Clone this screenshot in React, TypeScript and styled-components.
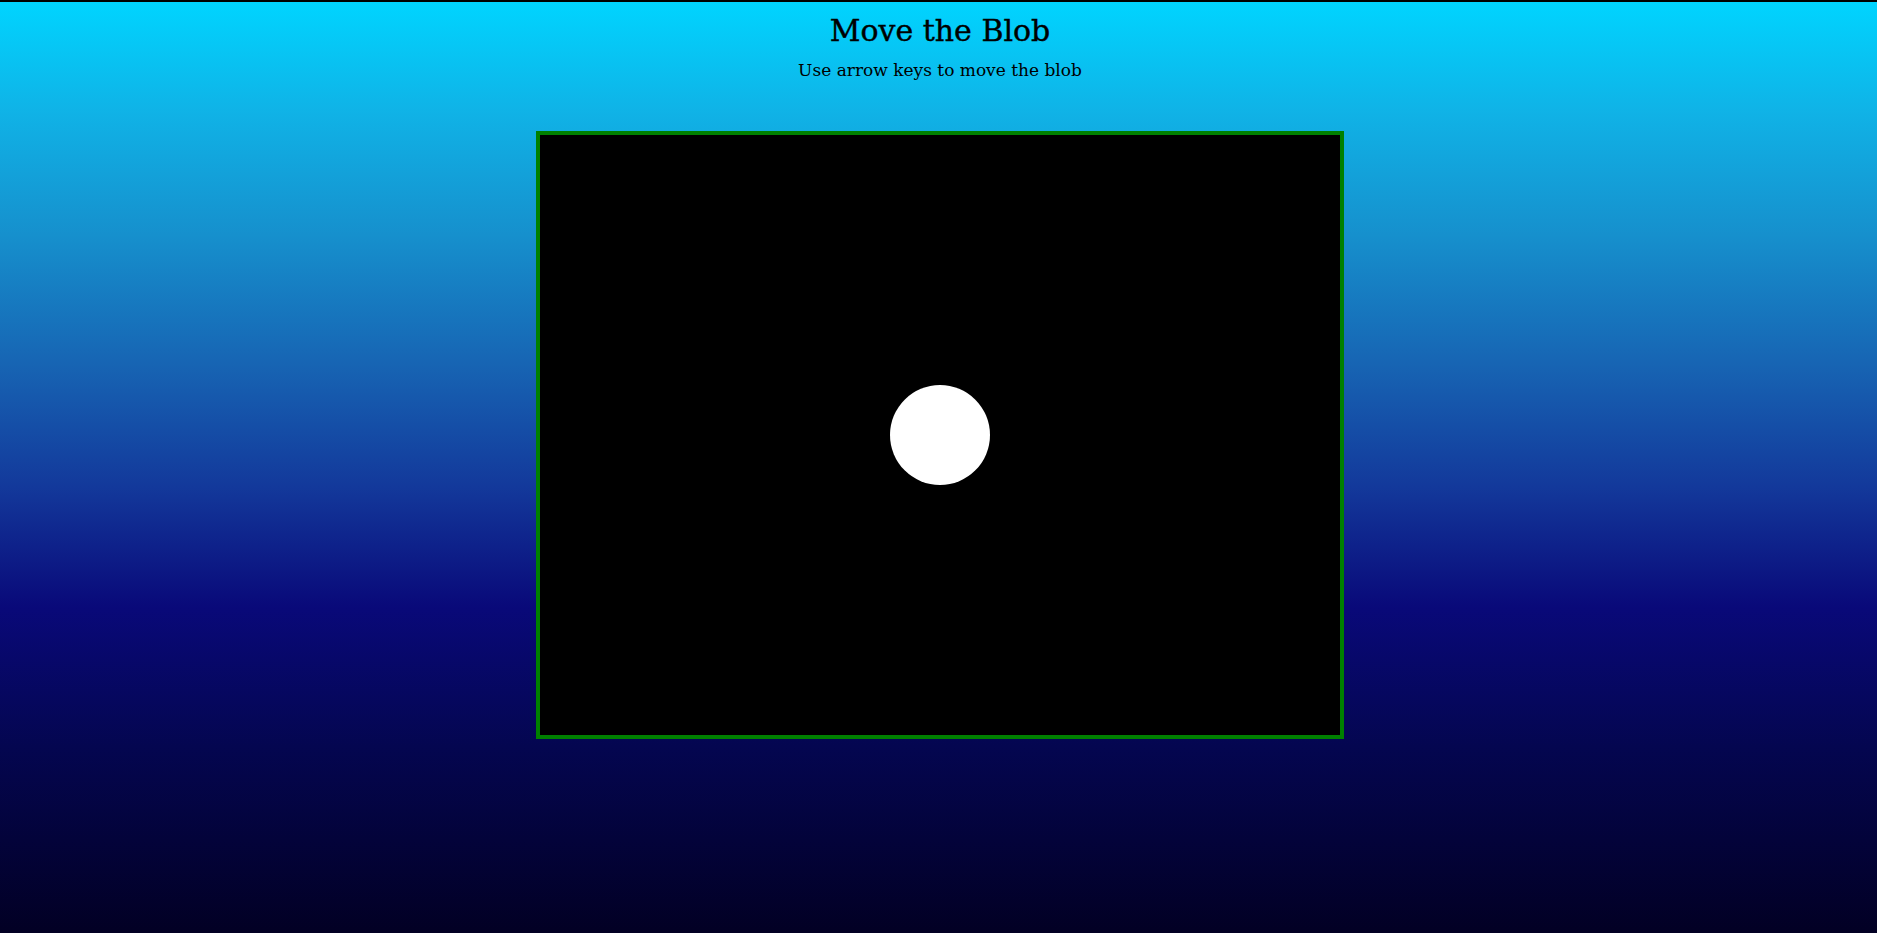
import React from "react";
import styled, { createGlobalStyle } from "styled-components";

const GlobalStyle = createGlobalStyle`
  html, body {
    margin: 0;
    padding: 0;
    height: 100%;
    background: #000;
  }
  #root {
    min-height: 100%;
  }
`;

const Page = styled.div`
  box-sizing: border-box;
  min-height: 100vh;
  border-top: 2px solid #000;
  padding-left: 3px;
  background: linear-gradient(
    180deg,
    #00d4ff 0%,
    #10b2e6 12%,
    #1690cd 25%,
    #1764b3 39%,
    #13399b 52%,
    #090979 65%,
    #040650 80%,
    #020024 100%
  );
  display: flex;
  flex-direction: column;
  align-items: center;
  font-family: "DejaVu Serif", "Liberation Serif", serif;
  color: #000;
`;

const Title = styled.h1`
  margin: 11px 0 0;
  font-size: 30px;
  font-weight: normal;
  line-height: 36px;
  -webkit-text-stroke: 0.4px #000;
`;

const Subtitle = styled.p`
  margin: 11px 0 0;
  font-size: 17px;
  line-height: 20px;
`;

const Board = styled.div`
  margin-top: 51px;
  width: 800px;
  height: 600px;
  border: 4px solid #008000;
  background: #000;
  display: flex;
  align-items: center;
  justify-content: center;
`;

const Blob = styled.div<{ $size: number }>`
  width: ${(p) => p.$size}px;
  height: ${(p) => p.$size}px;
  border-radius: 50%;
  background: #fff;
`;

export default function App() {
  return (
    <>
      <GlobalStyle />
      <Page>
        <Title>Move the Blob</Title>
        <Subtitle>Use arrow keys to move the blob</Subtitle>
        <Board>
          <Blob $size={100} />
        </Board>
      </Page>
    </>
  );
}
